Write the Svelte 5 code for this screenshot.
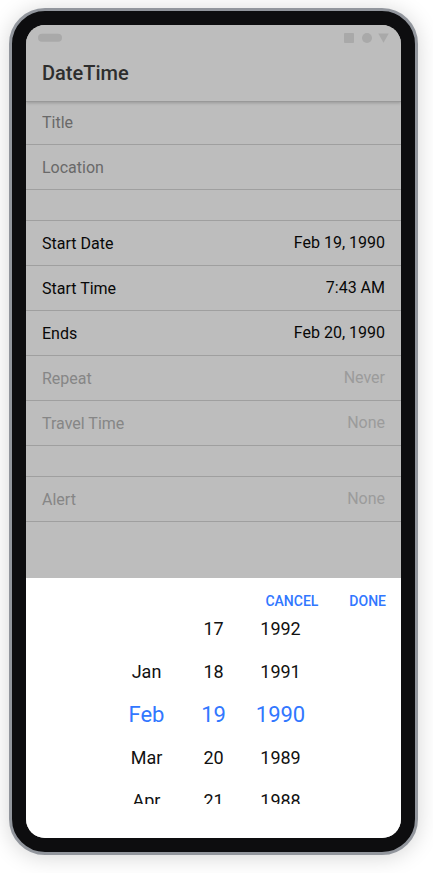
<script>
  const groups = [
    [
      { label: 'Start Date', value: 'Feb 19, 1990' },
      { label: 'Start Time', value: '7:43 AM' },
      { label: 'Ends', value: 'Feb 20, 1990' },
      { label: 'Repeat', value: 'Never', disabled: true },
      { label: 'Travel Time', value: 'None', disabled: true },
    ],
    [{ label: 'Alert', value: 'None', disabled: true }],
  ];

  const columns = [
    { name: 'Month', options: ['', 'Jan', 'Feb', 'Mar', 'Apr'] },
    { name: 'Day', options: ['17', '18', '19', '20', '21'] },
    { name: 'Year', options: ['1992', '1991', '1990', '1989', '1988'] },
  ];
  const selected = 2;
</script>

<div class="device">
  <main class="screen">
    <header>
      <svg class="status" viewBox="0 0 24 9" width="24" height="9" aria-hidden="true">
        <rect width="24" height="8" y=".8" rx="4" />
      </svg>
      <svg class="status signals" viewBox="0 0 45 10" width="45" height="10" aria-hidden="true">
        <rect width="10" height="10" rx="1" />
        <circle cx="23" cy="5" r="5" />
        <path d="M34.300 .5h10.400L39.500 9.800z" />
      </svg>
      <h1>DateTime</h1>
    </header>

    <div class="content">
      <section>
        <input type="text" placeholder="Title" aria-label="Title" />
        <input type="text" placeholder="Location" aria-label="Location" />
      </section>
      {#each groups as group}
        <section class="group">
          {#each group as item}
            <button class="item" disabled={item.disabled}>
              <span class="label">{item.label}</span>
              <span class="value">{item.value}</span>
            </button>
          {/each}
        </section>
      {/each}
    </div>

    <div class="sheet" role="dialog" aria-label="Choose a date">
      <div class="toolbar">
        <button>CANCEL</button>
        <button>DONE</button>
      </div>
      <div class="picker">
        {#each columns as column}
          <div class="column" role="group" aria-label={column.name}>
            {#each column.options as option, i}
              {#if option}
                <button class:selected={i === selected} aria-pressed={i === selected}>{option}</button>
              {:else}
                <span></span>
              {/if}
            {/each}
          </div>
        {/each}
      </div>
    </div>
  </main>
</div>

<style>
  :global(body) {
    margin: 0;
    background: #fff;
  }

  .device {
    box-sizing: border-box;
    margin: 8px 15px 18px 9px;
    padding: 14px;
    border: 3px solid #92969d;
    border-radius: 36px;
    background: #0d0d0f;
    box-shadow: 0 2px 22px rgba(0, 0, 0, 0.17);
    font-family: Roboto, sans-serif;
  }

  .screen {
    display: flex;
    flex-direction: column;
    min-height: calc(100vh - 60px);
    overflow: hidden;
    border-radius: 19px;
    background: #bdbdbd;
  }

  button,
  input {
    box-sizing: border-box;
    margin: 0;
    padding: 0;
    border: 0;
    border-radius: 0;
    background: none;
    color: inherit;
    font: inherit;
  }

  header {
    display: grid;
    grid-template-columns: 1fr auto;
    grid-template-rows: 20px 56px;
    align-items: center;
    padding: 0 12px;
    position: relative;
    z-index: 1;
    background: #bdbdbd;
    box-shadow: 0 1px 0 #999, 0 2px 3px rgba(0, 0, 0, 0.2);
  }

  .status {
    align-self: end;
    margin-bottom: 3px;
    fill: #a9a9a9;
  }

  .signals {
    margin-bottom: 2px;
  }

  h1 {
    grid-column: 1 / -1;
    margin: 0 4px;
    color: #2e2e2e;
    font-size: 20px;
    font-weight: 500;
    line-height: 24px;
  }

  .content {
    flex: 1;
    margin-top: -1px;
    font-size: 16px;
    line-height: 20px;
  }

  input,
  .item {
    display: flex;
    width: 100%;
    height: 45px;
    padding: 0 16px;
    border-bottom: 1px solid #9f9f9f;
  }

  input::placeholder {
    color: #696969;
    opacity: 1;
  }

  .group {
    margin-top: 30px;
    border-top: 1px solid #9f9f9f;
  }

  .item {
    justify-content: space-between;
    align-items: center;
    color: #080808;
  }

  .label {
    padding-top: 2px;
  }

  .item:disabled .label {
    color: #868686;
  }

  .item:disabled .value {
    color: #9b9b9b;
  }

  .sheet {
    height: 260px;
    background: #fff;
  }

  .toolbar {
    display: flex;
    justify-content: flex-end;
    align-items: center;
    gap: 31px;
    height: 34px;
    padding: 6px 15px 0;
    color: #3177ff;
    font-size: 14px;
    font-weight: 500;
    line-height: 20px;
  }

  .picker {
    box-sizing: border-box;
    display: flex;
    justify-content: center;
    height: 186px;
    padding-top: 6px;
    overflow: hidden;
  }

  .column {
    display: flex;
    flex-direction: column;
    justify-content: center;
    width: 67px;
    color: #111;
    font-size: 18px;
  }

  .column > * {
    flex: none;
    height: 43px;
    text-align: center;
  }

  .column .selected {
    color: #3177ff;
    font-size: 22px;
  }
</style>
